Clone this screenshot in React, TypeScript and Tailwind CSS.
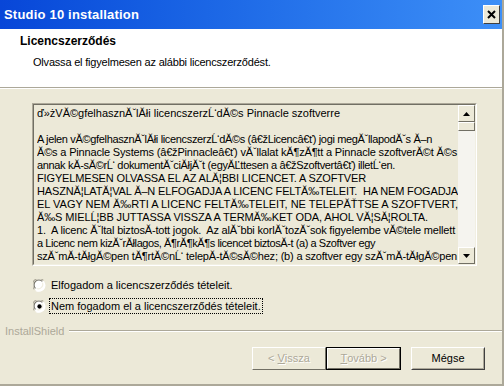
import React, { useLayoutEffect, useRef, useState } from "react";

const lines: string[] = [
  "ď»żVĂ©gfelhasznĂˇlĂłi licencszerzĹ‘dĂ©s Pinnacle szoftverre",
  "",
  "A jelen vĂ©gfelhasznĂˇlĂłi licencszerzĹ‘dĂ©s (â€žLicencâ€ť) jogi megĂˇllapodĂˇs Ă–n",
  "Ă©s a Pinnacle Systems (â€žPinnacleâ€ť) vĂˇllalat kĂ¶zĂ¶tt a Pinnacle szoftverĂ©t Ă©s",
  "annak kĂ-sĂ©rĹ‘ dokumentĂˇciĂłjĂˇt (egyĂĽttesen a â€žSzoftvertâ€ť) illetĹ‘en.",
  "FIGYELMESEN OLVASSA EL AZ ALĂ¦BBI LICENCET. A SZOFTVER",
  "HASZNĂ¦LATĂ¦VAL Ă–N ELFOGADJA A LICENC FELTĂ‰TELEIT.  HA NEM FOGADJA",
  "EL VAGY NEM Ă‰RTI A LICENC FELTĂ‰TELEIT, NE TELEPĂŤTSE A SZOFTVERT,",
  "Ă‰S MIELĹ¦BB JUTTASSA VISSZA A TERMĂ‰KET ODA, AHOL VĂ¦SĂ¦ROLTA.",
  "1.  A licenc Ăˇltal biztosĂ-tott jogok.  Az alĂˇbbi korlĂˇtozĂˇsok figyelembe vĂ©tele mellett",
  "a Licenc nem kizĂˇrĂłlagos, Ă¶rĂ¶kĂ¶s licencet biztosĂ-t (a) a Szoftver egy",
  "szĂˇmĂ-tĂłgĂ©pen tĂ¶rtĂ©nĹ‘ telepĂ-tĂ©sĂ©hez; (b) a szoftver egy szĂˇmĂ-tĂłgĂ©pen",
];

const targets = [303, 0, 395, 420, 358, 329, 421, 421, 391, 418, 338, 420];

function Radio({ checked }: { checked: boolean }) {
  return (
    <svg width="13" height="13" viewBox="0 0 12 12" className="shrink-0">
      <circle cx="6" cy="6" r="5.5" fill="#ffffff" />
      <path d="M1.2 9.5 A5.5 5.5 0 0 1 9.5 1.2" fill="none" stroke="#ACA899" strokeWidth="1" />
      <path d="M2.3 8.6 A4.3 4.3 0 0 1 8.6 2.3" fill="none" stroke="#716F64" strokeWidth="1" />
      <path d="M9.5 2.5 A5.5 5.5 0 0 1 2.5 10.6" fill="none" stroke="#ffffff" strokeWidth="1" />
      <path d="M8.8 3.3 A4.3 4.3 0 0 1 3.3 8.8" fill="none" stroke="#F1EFE2" strokeWidth="1" />
      {checked && <circle cx="6" cy="6" r="2" fill="#000" />}
    </svg>
  );
}

function ScrollBtn({ up }: { up: boolean }) {
  return (
    <div className="w-[17px] h-[17px] bg-[#ECE9D8] border border-t-white border-l-white border-r-[#716F64] border-b-[#716F64] flex items-center justify-center shrink-0">
      <svg width="7" height="4" viewBox="0 0 7 4">
        {up ? <path d="M3.5 0 L7 4 L0 4 Z" fill="#000" /> : <path d="M0 0 L7 0 L3.5 4 Z" fill="#000" />}
      </svg>
    </div>
  );
}

export default function App() {
  const refs = useRef<(HTMLSpanElement | null)[]>([]);
  const [spacing, setSpacing] = useState<number[]>(lines.map(() => 0));

  useLayoutEffect(() => {
    const next = lines.map((l, i) => {
      const el = refs.current[i];
      if (!el || !l || !targets[i]) return 0;
      const w = el.getBoundingClientRect().width;
      const n = Array.from(l).length;
      return (targets[i] - w) / n;
    });
    setSpacing(next);
  }, []);

  return (
    <div
      className="w-[504px] h-[386px] bg-[#ECE9D8] flex flex-col overflow-hidden text-[11px] text-black border-r-[2px] border-r-[#ACA899] border-b-[2px] border-b-[#ACA899]"
      style={{ fontFamily: '"Liberation Sans", Arial, sans-serif' }}
    >
      {/* Title bar */}
      <div className="h-[29px] shrink-0 flex items-center justify-between pl-[4px] pr-[2px] bg-gradient-to-r from-[#0846D8] to-[#3D8FF7]">
        <span className="text-white font-bold text-[13px] tracking-[0.2px]">Studio 10 installation</span>
        <div className="w-[17px] h-[19px] bg-[#ECE9D8] border border-t-white border-l-white border-r-[#404040] border-b-[#404040] flex items-center justify-center">
          <svg width="9" height="9" viewBox="0 0 9 9">
            <path d="M1 1 L8 8 M8 1 L1 8" stroke="#000" strokeWidth="2" />
          </svg>
        </div>
      </div>

      <div className="flex-1 flex flex-col">
        {/* Header */}
        <div className="h-[58px] shrink-0 bg-white flex flex-col pt-[5px]">
          <div className="pl-[20px] font-bold text-[12px] leading-[15px]">Licencszerződés</div>
          <div className="pl-[33px] mt-[6px] leading-[14px] tracking-[-0.2px]">Olvassa el figyelmesen az alábbi licencszerződést.</div>
        </div>
        <div className="h-[1px] bg-[#ACA899] shrink-0" />
        <div className="h-[1px] bg-white shrink-0" />

        {/* License box */}
        <div className="ml-[32px] mt-[14px] w-[445px] h-[163px] shrink-0 border border-t-[#ACA899] border-l-[#ACA899] border-r-white border-b-white">
          <div className="w-full h-full border border-t-[#716F64] border-l-[#716F64] border-r-[#F1EFE2] border-b-[#F1EFE2] flex">
            <div className="flex-1 overflow-hidden pl-[3px] pt-[2px]">
              {lines.map((l, i) => (
                <div key={i} className="h-[13px] leading-[13px] whitespace-pre overflow-hidden">
                  <span
                    ref={(el) => {
                      refs.current[i] = el;
                    }}
                    className="inline-block whitespace-pre"
                    style={{ letterSpacing: `${spacing[i]}px` }}
                  >
                    {l === "" ? "\u00a0" : l}
                  </span>
                </div>
              ))}
            </div>
            <div className="w-[17px] flex flex-col shrink-0">
              <ScrollBtn up />
              <div className="h-[9px] bg-[#ECE9D8] border border-t-white border-l-white border-r-[#716F64] border-b-[#716F64] shrink-0" />
              <div className="flex-1 bg-[#F5F4EF]" />
              <ScrollBtn up={false} />
            </div>
          </div>
        </div>

        {/* Radios */}
        <div className="ml-[33px] mt-[11px] flex flex-col gap-[5px]">
          <div className="h-[16px] flex items-center">
            <Radio checked={false} />
            <span className="ml-[3px] px-[1px] border border-transparent leading-[14px]">Elfogadom a licencszerződés tételeit.</span>
          </div>
          <div className="h-[16px] flex items-center">
            <Radio checked />
            <span className="ml-[3px] px-[1px] border border-dotted border-black leading-[14px]">Nem fogadom el a licencszerződés tételeit.</span>
          </div>
        </div>

        {/* InstallShield */}
        <div className="mt-[10px] h-[14px] flex items-center pl-[5px]">
          <span className="text-[#ACA899] leading-[14px]">InstallShield</span>
          <div className="flex-1 ml-[5px] flex flex-col">
            <div className="h-[1px] bg-[#ACA899]" />
            <div className="h-[1px] bg-white" />
          </div>
        </div>

        {/* Buttons */}
        <div className="mt-[9px] flex pl-[252px]">
          <div className="w-[74px] h-[23px] border border-t-white border-l-white border-r-[#716F64] border-b-[#716F64] flex items-center justify-center text-[#ACA899] [text-shadow:1px_1px_0_#fff]">
            &lt; <span className="underline ml-[3px]">V</span>issza
          </div>
          <div className="w-[75px] h-[23px] border border-black">
            <div className="w-full h-full border border-t-white border-l-white border-r-[#716F64] border-b-[#716F64] flex items-center justify-center text-[#ACA899] [text-shadow:1px_1px_0_#fff]">
              <span className="underline">T</span>ovább &gt;
            </div>
          </div>
          <div className="ml-[10px] w-[74px] h-[23px] border border-t-white border-l-white border-r-[#404040] border-b-[#404040]">
            <div className="w-full h-full border border-transparent border-r-[#ACA899] border-b-[#ACA899] flex items-center justify-center">
              Mégse
            </div>
          </div>
        </div>
      </div>
    </div>
  );
}
